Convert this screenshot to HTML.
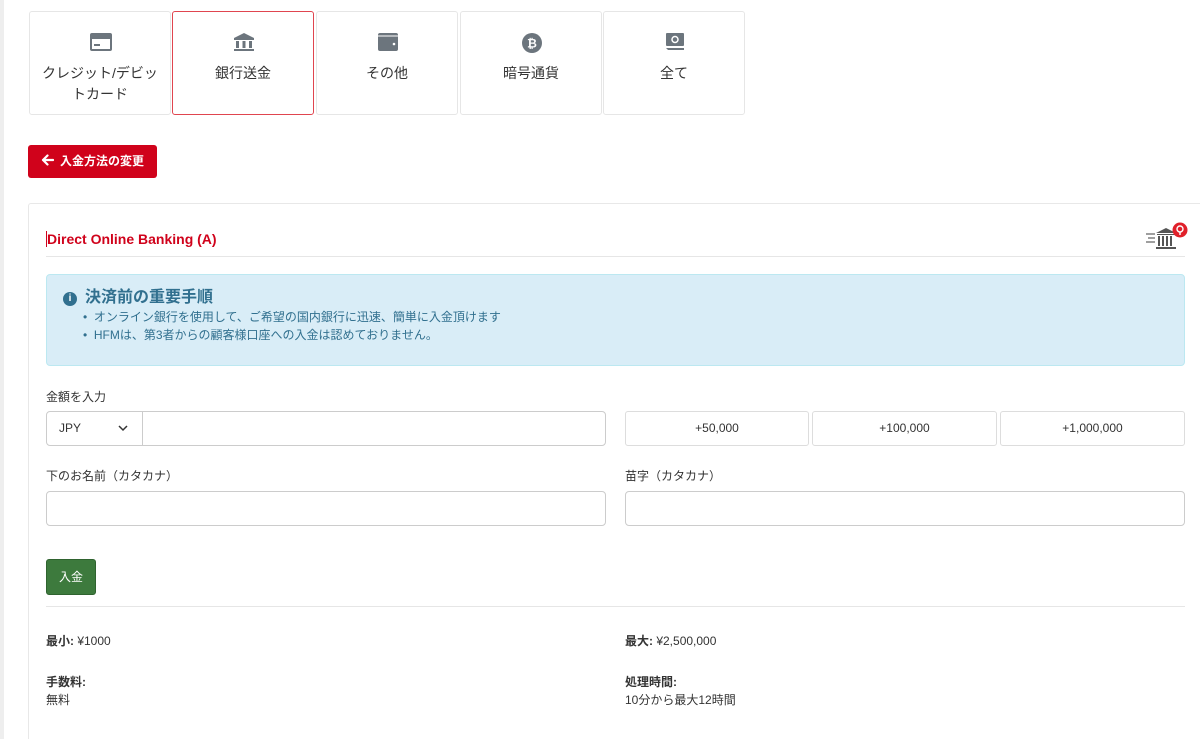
<!DOCTYPE html><html><head><meta charset="utf-8"><style>
*{box-sizing:border-box;margin:0;padding:0}
html{width:1200px;height:739px;overflow:hidden}
body{width:1200px;height:739px;overflow:hidden;background:#fff;font-family:"Liberation Sans","Noto Sans CJK JP",sans-serif;color:#333;font-size:12px;position:relative;border-left:4px solid #eee}
.a{position:absolute}
.tile{position:absolute;top:11px;height:104px;width:142px;border:1px solid #e6e6e6;border-radius:3px;text-align:center;font-size:14px;color:#333}
.tile svg{position:absolute;left:59px;top:20px}
.tile span{position:absolute;left:0;right:0;top:51px;line-height:21px}
.sel{border:1px solid #e0454f}
.inp{position:absolute;border:1px solid #ccc;border-radius:4px;background:#fff}
.qb{position:absolute;top:411px;height:35px;border:1px solid #ddd;border-radius:3px;text-align:center;line-height:33px;font-size:12px;color:#333}
</style></head><body>
<div class="tile" style="left:25px"><svg width="24" height="20" viewBox="0 0 24 20"><rect x="1" y="1" width="22" height="18" rx="2" fill="#6c757d"/><rect x="3" y="7" width="18" height="10" fill="#fff"/><rect x="5" y="12" width="6" height="2" fill="#6c757d"/></svg><span>クレジット/デビッ<br>トカード</span></div>
<div class="tile sel" style="left:168px"><svg width="24" height="20" viewBox="0 0 24 20"><path d="M12 1L2 6v2h20V6z M4 9h3v7H4z M10.5 9h3v7h-3z M17 9h3v7h-3z M2 17h20v2H2z" fill="#6c757d"/></svg><span>銀行送金</span></div>
<div class="tile" style="left:312px"><svg width="24" height="20" viewBox="0 0 24 20"><rect x="2" y="1" width="20" height="18" rx="2" fill="#6c757d"/><rect x="2" y="3" width="20" height="2" fill="#fff" opacity=".5"/><circle cx="18" cy="12" r="1.3" fill="#fff"/></svg><span>その他</span></div>
<div class="tile" style="left:456px"><svg width="24" height="22" viewBox="0 0 24 22"><circle cx="12" cy="11" r="10" fill="#6c757d"/><text x="12" y="15.5" font-size="12" font-weight="bold" fill="#fff" text-anchor="middle" font-family="Liberation Sans">₿</text></svg><span>暗号通貨</span></div>
<div class="tile" style="left:599px"><svg width="24" height="20" viewBox="0 0 24 20"><rect x="3" y="1" width="18" height="13" rx="1" fill="#6c757d"/><circle cx="12" cy="7.5" r="3" fill="none" stroke="#fff" stroke-width="1.5"/><path d="M3 16h18v2H5z" fill="#6c757d"/></svg><span>全て</span></div>
<div class="a" style="left:24px;top:145px;width:129px;height:33px;background:#d0021b;border-radius:3px;color:#fff;font-weight:bold;font-size:12px;line-height:33px;padding-left:13px;white-space:nowrap"><svg width="13" height="12" viewBox="0 0 13 12" style="vertical-align:-1px;margin-right:6px"><path d="M12 6H2M6.5 1.5L2 6l4.5 4.5" stroke="#fff" stroke-width="2.2" fill="none" stroke-linecap="round" stroke-linejoin="round"/></svg>入金方法の変更</div>
<div class="a" style="left:24px;top:203px;width:1200px;height:560px;border:1px solid #e8e8e8;border-radius:3px"></div>
<div class="a" style="left:42px;top:231px;color:#d0021b;font-weight:bold;font-size:14px;border-left:1px solid #d0021b">Direct Online Banking (A)</div>
<svg class="a" style="left:1140px;top:222px" width="46" height="28" viewBox="0 0 46 28"><path d="M2 12h9M4 16h7M2 20h9" stroke="#666" stroke-width="1.3"/><path d="M22 6l-10 5h20z M13 12h18v1H13z M14 14h2v10h-2z M18 14h2v10h-2z M22 14h2v10h-2z M26 14h2v10h-2z M12 25h20v2H12z" fill="#555"/><circle cx="36" cy="8" r="7.5" fill="#e0202a"/><circle cx="36" cy="7" r="3" fill="none" stroke="#fff" stroke-width="1.4"/><path d="M36 10v3" stroke="#fff" stroke-width="1.4"/></svg>
<div class="a" style="left:42px;top:256px;width:1139px;height:1px;background:#e6e6e6"></div>
<div class="a" style="left:42px;top:274px;width:1139px;height:92px;background:#d9edf7;border:1px solid #bce8f1;border-radius:4px;color:#31708f">
<div class="a" style="left:16px;top:8px;font-size:16px;font-weight:bold"><span style="display:inline-block;width:14px;height:14px;border-radius:50%;background:#31708f;color:#fff;font-size:10px;text-align:center;line-height:14px;font-weight:bold;vertical-align:1px;margin-right:8px">i</span>決済前の重要手順</div>
<div class="a" style="left:36px;top:33px;font-size:12px;line-height:18px">•&nbsp; オンライン銀行を使用して、ご希望の国内銀行に迅速、簡単に入金頂けます<br>•&nbsp; HFMは、第3者からの顧客様口座への入金は認めておりません。</div></div>
<div class="a" style="left:42px;top:388px">金額を入力</div>
<div class="inp" style="left:42px;top:411px;width:97px;height:35px;border-radius:4px 0 0 4px;padding:9px 12px">JPY<svg style="position:absolute;right:14px;top:13px" width="10" height="7" viewBox="0 0 10 7"><path d="M1 1l4 4 4-4" stroke="#333" stroke-width="1.5" fill="none"/></svg></div>
<div class="inp" style="left:138px;top:411px;width:464px;height:35px;border-radius:0 4px 4px 0"></div>
<div class="qb" style="left:621px;width:184px">+50,000</div>
<div class="qb" style="left:808px;width:185px">+100,000</div>
<div class="qb" style="left:996px;width:185px">+1,000,000</div>
<div class="a" style="left:42px;top:467px">下のお名前（カタカナ）</div>
<div class="a" style="left:621px;top:467px">苗字（カタカナ）</div>
<div class="inp" style="left:42px;top:491px;width:560px;height:35px"></div>
<div class="inp" style="left:621px;top:491px;width:560px;height:35px"></div>
<div class="a" style="left:42px;top:559px;width:50px;height:36px;background:#3d7a3d;border:1px solid #2f632f;border-radius:3px;color:#fff;text-align:center;line-height:34px">入金</div>
<div class="a" style="left:42px;top:606px;width:1139px;height:1px;background:#e6e6e6"></div>
<div class="a" style="left:42px;top:632px"><b>最小:</b> ¥1000</div>
<div class="a" style="left:621px;top:632px"><b>最大:</b> ¥2,500,000</div>
<div class="a" style="left:42px;top:673px;line-height:18px"><b>手数料:</b><br>無料</div>
<div class="a" style="left:621px;top:673px;line-height:18px"><b>処理時間:</b><br>10分から最大12時間</div>
</body></html>
